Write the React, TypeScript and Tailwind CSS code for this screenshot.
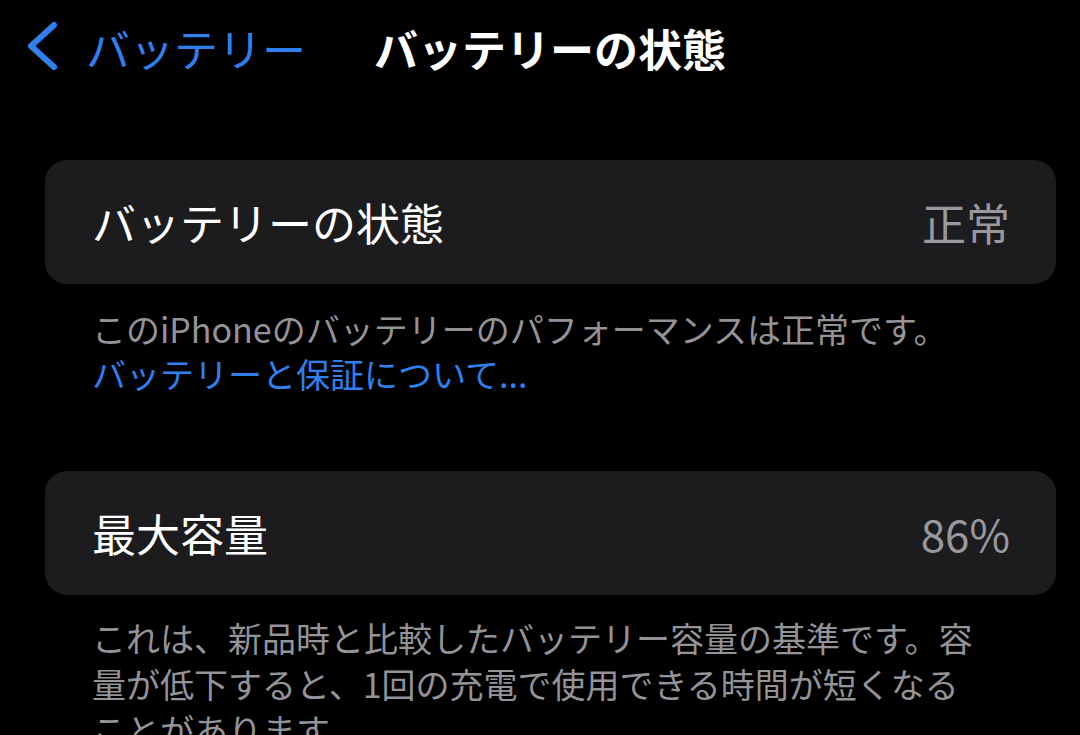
import { ReactNode } from "react";

const font = { fontFamily: '"Noto Sans CJK JP", "Noto Sans", sans-serif' };

function Row({ label, value }: { label: string; value: string }) {
  return (
    <div className="ml-[45px] mr-[24px] h-[124px] rounded-[22px] bg-[#1c1c1e] pl-[47px] pr-[46px] flex items-center justify-between">
      <span className="text-[44px] text-white leading-none">{label}</span>
      <span className="text-[44px] text-[#98989e] leading-none">{value}</span>
    </div>
  );
}

function Footer({ children, className = "" }: { children: ReactNode; className?: string }) {
  return (
    <div className={`ml-[45px] mr-[24px] pl-[47px] pr-[70px] text-[34px] text-[#939398] ${className}`}>
      {children}
    </div>
  );
}

export default function App() {
  return (
    <div className="w-[1080px] h-[735px] overflow-hidden bg-black" style={font}>
      <div className="h-[96px] flex items-center pl-[25px]">
        <svg width="34" height="50" viewBox="0 0 34 50" className="shrink-0 -mt-1">
          <path d="M29 4 L6 25 L29 46" fill="none" stroke="#2f80ed" strokeWidth="6" strokeLinecap="round" strokeLinejoin="round" />
        </svg>
        <span className="ml-[27px] text-[44px] text-[#2f80ed] leading-none">バッテリー</span>
        <span className="ml-[68px] text-[44px] font-bold text-white leading-none">バッテリーの状態</span>
      </div>

      <div className="pt-[64px]">
        <Row label="バッテリーの状態" value="正常" />
        <Footer className="mt-[22px] leading-[45px]">
          <div>このiPhoneのバッテリーのパフォーマンスは正常です。</div>
          <div className="text-[#2f80ed]">バッテリーと保証について...</div>
        </Footer>

        <div className="h-[75px]" />
        <Row label="最大容量" value="86%" />
        <Footer className="mt-[20px] leading-[46px]">
          これは、新品時と比較したバッテリー容量の基準です。容量が低下すると、1回の充電で使用できる時間が短くなることがあります。
        </Footer>
      </div>
    </div>
  );
}
